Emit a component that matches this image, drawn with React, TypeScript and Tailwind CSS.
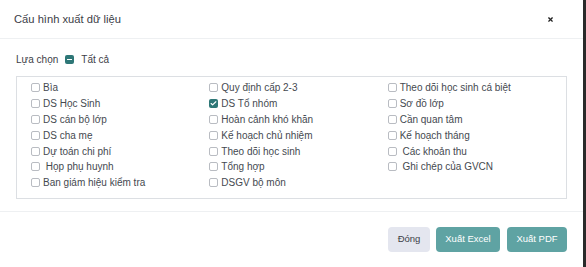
import { Check, X } from "lucide-react";

const columns = [
  ["Bìa", "DS Học Sinh", "DS cán bộ lớp", "DS cha mẹ", "Dự toán chi phí", " Họp phụ huynh", "Ban giám hiệu kiểm tra"],
  ["Quy định cấp 2-3", "DS Tổ nhóm", "Hoàn cảnh khó khăn", "Kế hoạch chủ nhiệm", "Theo dõi học sinh", "Tổng hợp", "DSGV bộ môn"],
  ["Theo dõi học sinh cá biệt", "Sơ đồ lớp", "Cần quan tâm", "Kế hoạch tháng", " Các khoản thu", " Ghi chép của GVCN"],
];

const checked = ["DS Tổ nhóm"];

function Box({ on }: { on: boolean }) {
  if (on) {
    return (
      <span className="flex h-[9px] w-[9px] shrink-0 items-center justify-center rounded-[2px] bg-[#2e7777]">
        <Check className="h-[7px] w-[7px] text-white" strokeWidth={4} />
      </span>
    );
  }
  return <span className="h-[9px] w-[9px] shrink-0 rounded-[2px] border border-[#b9bcc2] bg-white" />;
}

export default function App() {
  return (
    <div className="flex h-[267px] w-[586px] bg-[#2a2a2a] font-['Liberation_Sans',Arial,sans-serif]">
      <div className="flex h-full w-[583px] flex-col bg-white">
        {/* Header */}
        <div className="flex h-[39px] items-center justify-between border-b border-[#eef0f2] pl-[14px] pr-[29px]">
          <h2 className="text-[11.2px] text-[#3c4047]">Cấu hình xuất dữ liệu</h2>
          <X className="h-[7px] w-[7px] text-[#222]" strokeWidth={4} />
        </div>

        {/* Body */}
        <div className="flex h-[173px] flex-col border-b border-[#eef0f2] pl-[16px] pr-[16px] pt-[13px]">
          <div className="flex items-center text-[10px] text-[#3c4047]">
            <span>Lựa chọn</span>
            <span className="ml-[7px] flex h-[9px] w-[9px] items-center justify-center rounded-[2px] bg-[#2e7777]">
              <span className="h-[1.5px] w-[5px] bg-white" />
            </span>
            <span className="ml-[7px]">Tất cả</span>
          </div>

          <div className="mt-[9px] grid h-[123px] grid-cols-3 border border-[#dcdfe3] pl-[14px] pt-[3px]">
            {columns.map((col, i) => (
              <div key={i} className="flex flex-col">
                {col.map((item) => (
                  <label key={item} className="flex h-[15.8px] items-center gap-[3px] whitespace-pre text-[10px] text-[#454950]">
                    <Box on={checked.includes(item)} />
                    <span>{item}</span>
                  </label>
                ))}
              </div>
            ))}
          </div>
        </div>

        {/* Footer */}
        <div className="flex justify-end pr-[16px] pt-[15px] text-[9.5px] font-medium">
          <button className="h-[25px] w-[42px] rounded-[4px] bg-[#e4e6ef] text-[#3c4047]">Đóng</button>
          <button className="ml-[6px] h-[25px] w-[64px] rounded-[4px] bg-[#5fa3a3] text-white">Xuất Excel</button>
          <button className="ml-[7px] h-[25px] w-[60px] rounded-[4px] bg-[#5fa3a3] text-white">Xuất PDF</button>
        </div>
      </div>
    </div>
  );
}
